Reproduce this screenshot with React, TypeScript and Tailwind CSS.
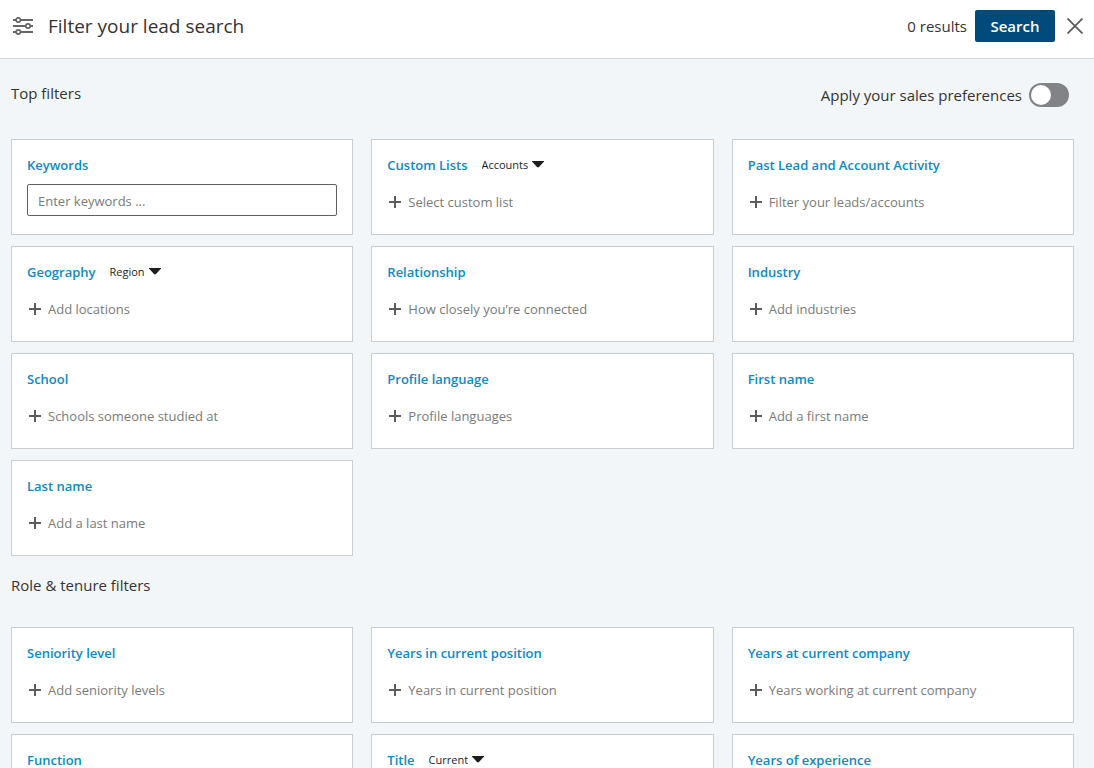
import { useState } from "react";

type Filter = {
  title: string;
  action?: string;
  placeholder?: string;
  scopes?: string[];
};

const topFilters: Filter[] = [
  { title: "Keywords", placeholder: "Enter keywords ..." },
  { title: "Custom Lists", action: "Select custom list", scopes: ["Accounts", "Leads"] },
  { title: "Past Lead and Account Activity", action: "Filter your leads/accounts" },
  { title: "Geography", action: "Add locations", scopes: ["Region", "Postal code"] },
  { title: "Relationship", action: "How closely you’re connected" },
  { title: "Industry", action: "Add industries" },
  { title: "School", action: "Schools someone studied at" },
  { title: "Profile language", action: "Profile languages" },
  { title: "First name", action: "Add a first name" },
  { title: "Last name", action: "Add a last name" },
];

const roleFilters: Filter[] = [
  { title: "Seniority level", action: "Add seniority levels" },
  { title: "Years in current position", action: "Years in current position" },
  { title: "Years at current company", action: "Years working at current company" },
  { title: "Function", action: "Add functions" },
  { title: "Title", action: "Add titles", scopes: ["Current", "Past"] },
  { title: "Years of experience", action: "Years of experience" },
];

function SlidersIcon() {
  return (
    <svg width="20" height="18" viewBox="0 0 20 18" fill="none" stroke="#666" strokeWidth="2" aria-hidden="true">
      <path d="M0 3h3M8 3h12M0 9h12.5M17.5 9H20M0 15h3M8 15h12" />
      <circle cx="5.3" cy="3" r="2.2" strokeWidth="1.7" />
      <circle cx="15" cy="9" r="2.2" strokeWidth="1.7" />
      <circle cx="5.3" cy="15" r="2.2" strokeWidth="1.7" />
    </svg>
  );
}

function ScopeSelect({ title, scopes }: { title: string; scopes: string[] }) {
  return (
    <div className="relative flex items-center">
      <select
        aria-label={`${title} scope`}
        className="field-sizing-content h-5 appearance-none bg-transparent pr-4 text-[11px] leading-5 font-normal text-[#1d1d1d]"
      >
        {scopes.map((scope) => (
          <option key={scope}>{scope}</option>
        ))}
      </select>
      <svg className="pointer-events-none absolute top-[6px] right-0" width="12" height="7" viewBox="0 0 12 7" aria-hidden="true">
        <path d="M0 0h12v.6L6.8 6.3H5.2L0 .6z" fill="#1d1d1d" />
      </svg>
    </div>
  );
}

function FilterCard({ title, action, placeholder, scopes }: Filter) {
  const id = title.toLowerCase().replaceAll(" ", "-");
  return (
    <div className="min-h-24 border border-[#c8cdd2] bg-white px-[15px] pt-[15px] pb-[14px]">
      <div className="flex h-5 items-center gap-[14px]">
        {placeholder ? (
          <label htmlFor={id} className="text-[13px] leading-5 font-semibold text-[#0b8ac9]">{title}</label>
        ) : (
          <h3 className="text-[13px] leading-5 font-semibold text-[#0b8ac9]">{title}</h3>
        )}
        {scopes && <ScopeSelect title={title} scopes={scopes} />}
      </div>
      {placeholder ? (
        <input
          id={id}
          type="text"
          placeholder={placeholder}
          className="mt-[9px] block h-8 w-full rounded-[2px] border border-[#606060] px-[10px] pt-[2px] text-[13px] leading-5 font-normal text-[#333] placeholder:text-[#7a7a7a]"
        />
      ) : (
        <button type="button" className="mt-[9px] flex h-9 items-center gap-[7px] pl-[2px] text-[13px] leading-5 font-normal text-[#7a7a7a]">
          <svg width="12" height="12" viewBox="0 0 12 12" aria-hidden="true">
            <path d="M6 0v12M0 6h12" stroke="#5c5c5c" strokeWidth="2" />
          </svg>
          {action}
        </button>
      )}
    </div>
  );
}

function FilterGrid({ filters }: { filters: Filter[] }) {
  return (
    <div className="grid grid-cols-3 gap-x-[18px] gap-y-[11px]">
      {filters.map((filter) => (
        <FilterCard key={filter.title} {...filter} />
      ))}
    </div>
  );
}

export default function App() {
  const [preferences, setPreferences] = useState(false);
  return (
    <div className="flex h-screen flex-col bg-[#f3f6f8] font-['Open_Sans','Noto_Sans',sans-serif] text-[#333]">
      <header className="flex shrink-0 items-center justify-between border-b border-[#d3d6d9] bg-white py-[10px] pr-[11px] pb-4 pl-[13px]">
        <div className="flex items-center gap-[15px]">
          <SlidersIcon />
          <h1 className="text-[19px] leading-8 font-normal">Filter your lead search</h1>
        </div>
        <div className="flex items-center">
          <p className="text-[15px]">
            <span className="font-medium">0</span> results
          </p>
          <button type="button" className="ml-2 h-8 w-20 rounded-[2px] bg-[#004b7c] text-[15px] font-semibold text-white">
            Search
          </button>
          <button type="button" aria-label="Close" className="ml-3">
            <svg width="16" height="16" viewBox="0 0 16 16" aria-hidden="true">
              <path d="M.5.5l15 15M15.5.5l-15 15" stroke="#5c5c5c" strokeWidth="1.8" />
            </svg>
          </button>
        </div>
      </header>

      <main className="min-h-0 flex-1 overflow-y-auto pr-5 pb-5 pl-[11px] [scrollbar-width:none]">
        <section className="pt-6">
          <div className="mb-8 flex items-start justify-between">
            <h2 className="text-[15px] leading-5">Top filters</h2>
            <label className="flex h-6 items-center gap-[7px] pr-[5px] text-[15px]">
              Apply your sales preferences
              <input
                type="checkbox"
                role="switch"
                checked={preferences}
                onChange={(event) => setPreferences(event.target.checked)}
                className="flex h-6 w-10 appearance-none items-center rounded-full bg-[#828386] p-[2px] before:size-5 before:rounded-full before:bg-white checked:justify-end checked:bg-[#004b7c]"
              />
            </label>
          </div>
          <FilterGrid filters={topFilters} />
        </section>

        <section className="pt-[19px]">
          <h2 className="mb-8 text-[15px] leading-5">Role &amp; tenure filters</h2>
          <FilterGrid filters={roleFilters} />
        </section>
      </main>
    </div>
  );
}
